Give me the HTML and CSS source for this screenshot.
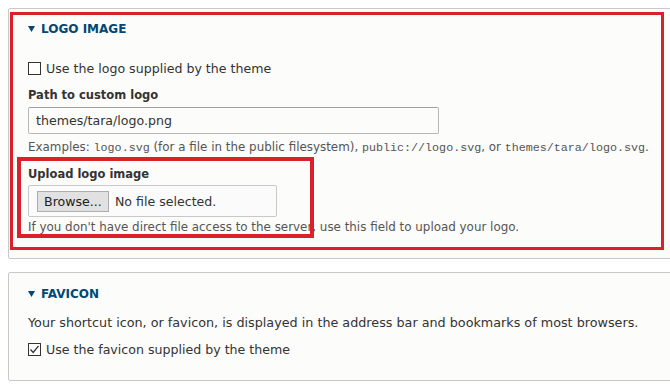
FILE: index.html
```html
<!DOCTYPE html>
<html lang="en">
<head>
<meta charset="UTF-8">
<title>Appearance settings</title>
<link rel="stylesheet" href="styles.css">
</head>
<body>
<div class="page">
<div class="fieldset">
<div class="summary">
<svg class="arrow" width="7" height="6" viewBox="0 0 7 6"><path d="M0 0H7L3.5 6Z" fill="#004875"/></svg>
<span>LOGO IMAGE</span>
</div>
<div class="check-row first">
<span class="box"></span>
<span>Use the logo supplied by the theme</span>
</div>
<div class="label">Path to custom logo</div>
<div class="text-input">themes/tara/logo.png</div>
<div class="desc">Examples: <code>logo.svg</code> (for a file in the public filesystem), <code>public://logo.svg</code>, or <code>themes/tara/logo.svg</code>.</div>
<div class="label upload">Upload logo image</div>
<div class="file-input">
<span class="browse">Browse...</span>
<span>No file selected.</span>
</div>
<div class="desc tight">If you don't have direct file access to the server, use this field to upload your logo.</div>
</div>

<div class="fieldset second">
<div class="summary">
<svg class="arrow" width="7" height="6" viewBox="0 0 7 6"><path d="M0 0H7L3.5 6Z" fill="#004875"/></svg>
<span>FAVICON</span>
</div>
<div class="intro">Your shortcut icon, or favicon, is displayed in the address bar and bookmarks of most browsers.</div>
<div class="check-row">
<span class="box"><svg width="11" height="11" viewBox="0 0 11 11"><path d="M1.5 5.5L4.2 8.5L9.5 1.8" fill="none" stroke="#333" stroke-width="1.3"/></svg></span>
<span>Use the favicon supplied by the theme</span>
</div>
</div>

<div class="mark mark-logo"></div>
<div class="mark mark-upload"></div>
</div>
</body>
</html>
```

FILE: styles.css
```css
html, body {
margin: 0;
background: #fff;
}
body {
font-family: 'DejaVu Sans', Verdana, sans-serif;
font-size: 12.6px;
color: #333;
}
.page {
position: relative;
width: 670px;
height: 391px;
box-sizing: border-box;
overflow: hidden;
padding: 8px 0 0 8px;
}
.fieldset {
width: 680px;
background: #fcfcfa;
border: 1px solid #c9c9c9;
border-radius: 2px;
padding: 11px 19px 22px 19px;
}
.fieldset.second {
margin-top: 13px;
padding-top: 12px;
}
.summary {
display: flex;
align-items: center;
height: 18px;
color: #004875;
font-weight: bold;
font-size: 12px;
}
.arrow {
margin-right: 6px;
}
.check-row {
display: flex;
align-items: center;
height: 18px;
margin-top: 8px;
}
.check-row.first {
margin-top: 21px;
}
.box {
width: 11px;
height: 11px;
border: 1px solid #333;
background: #fff;
margin-right: 5px;
display: flex;
align-items: center;
justify-content: center;
}
.label {
font-weight: bold;
font-size: 11.5px;
line-height: 18px;
margin-top: 9px;
}
.label.upload {
margin-top: 8px;
}
.text-input {
box-sizing: border-box;
width: 411px;
height: 27px;
margin-top: 3px;
border: 1px solid #b8b8b8;
border-top-color: #a0a0a0;
border-radius: 2px;
background: #fcfcfa;
padding: 0 7px;
line-height: 25px;
color: #333;
}
.desc {
font-size: 11.9px;
line-height: 18px;
margin-top: 4px;
color: #555;
white-space: nowrap;
}
.desc.tight {
margin-top: 1px;
}
.desc code {
font-family: 'Liberation Mono', 'Courier New', monospace;
font-size: 11.7px;
}
.file-input {
box-sizing: border-box;
width: 249px;
height: 32px;
margin-top: 2px;
border: 1px solid #c8c8c8;
border-radius: 2px;
background: #fbfbfb;
display: flex;
align-items: center;
padding-left: 8px;
gap: 6px;
}
.browse {
box-sizing: border-box;
height: 21px;
padding: 0 6px;
line-height: 19px;
border: 1px solid #adadad;
background: #e1e1e1;
color: #222;
}
.intro {
font-size: 12.75px;
line-height: 18px;
margin-top: 11px;
white-space: nowrap;
}
.mark {
position: absolute;
border: 3px solid #d9202b;
box-sizing: border-box;
}
.mark-logo {
left: 10px;
top: 12px;
width: 654px;
height: 238px;
}
.mark-upload {
left: 17px;
top: 157px;
width: 297px;
height: 81px;
border-width: 4px;
}
```
